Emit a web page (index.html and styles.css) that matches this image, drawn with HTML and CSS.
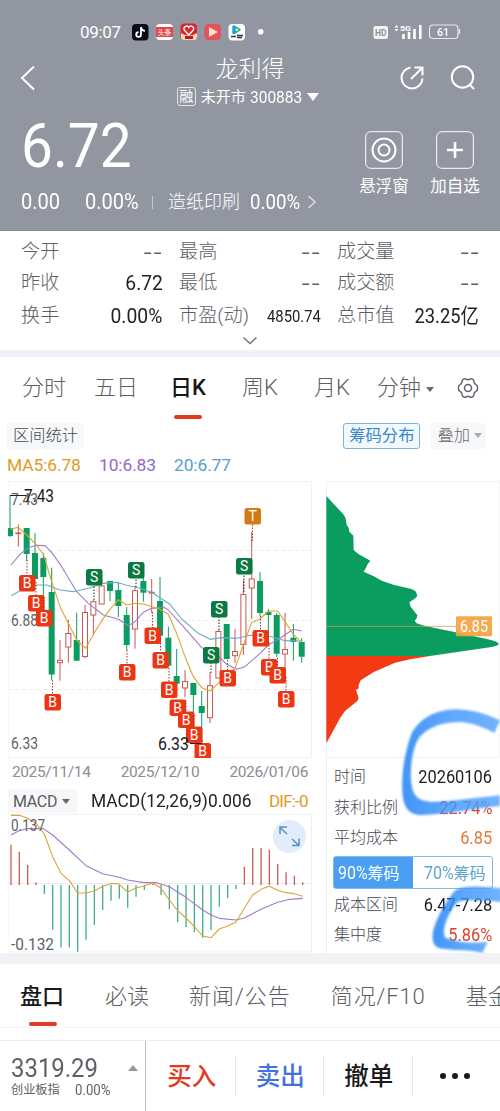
FILE: index.html
```html
<!DOCTYPE html>
<html lang="zh-CN">
<head>
<meta charset="utf-8">
<title>龙利得 300883</title>
<link rel="stylesheet" href="styles.css">
</head>
<body>
<div class="app">
  <header class="head">
    <div class="status">
      <span class="clock">09:07</span>
      <svg class="apps" width="190" height="18" viewBox="130 23 190 18">
        <rect x="132" y="24" width="16.500" height="16.500" rx="4" fill="#090b18"/>
        <path d="M141 27v7.500a2.400 2.400 0 1 1-2.400-2.400M141 27.500c.5 2 2 3.300 4 3.400" fill="none" stroke="#fff" stroke-width="1.800"/>
        <rect x="156" y="24" width="17" height="16" rx="4" fill="#fff"/>
        <rect x="156" y="27" width="17" height="10" fill="#e84549"/>
        <text x="157.500" y="35" font-size="7" fill="#fff" textLength="14">头条</text>
        <rect x="180.500" y="23.500" width="16.500" height="16.500" rx="4" fill="#d8242c"/>
        <path d="M181 33q8 5 16 0v4q0 3-3 3h-10q-3 0-3-3z" fill="#f7d8b8"/>
        <path d="M188.800 35l-4.500-5a2.300 2.300 0 0 1 4.500-2.500a2.300 2.300 0 0 1 4.500 2.500z" fill="#d8242c" stroke="#fff" stroke-width="1.400"/>
        <path d="M185 36h8v3h-8z" fill="#b51d24"/>
        <rect x="204.500" y="24" width="16.500" height="16" rx="4" fill="#e2535c"/>
        <path d="M209 27l9 5-9 5z" fill="#fde3c8"/>
        <rect x="228.500" y="24" width="16.500" height="16.500" rx="4" fill="#fff"/>
        <path d="M232.500 27q0-2 2-1.300l5 2.500q2.500 1.300 0 2.800l-5 3q-2 .6-2-1.500z" fill="#28b768"/><path d="M232.500 27q0-2 2-1.300l2 1-1 3.500 1.500 2.500-2.500 1.300q-2 .6-2-1.500z" fill="#1e9bea"/><path d="M235.800 28.200l2.800 1.500-2.800 1.500z" fill="#fff"/>
        <path d="M231 36.500h5m1-1h6m-6 2h5" stroke="#333" stroke-width="1.300"/>
        <circle cx="260.700" cy="31.700" r="2.800" fill="#fff"/>
      </svg>
      <svg class="signal" width="90" height="18" viewBox="372 23 90 18">
        <rect x="373.500" y="26" width="14.500" height="13" rx="2" fill="#f3f4f6"/>
        <text x="375" y="36" font-size="9.500" font-weight="700" fill="#8d9199" textLength="11.500" lengthAdjust="spacingAndGlyphs">HD</text>
        <path d="M394.500 27.500l2-2.500 2 2.500zM394.500 29l2 2.500 2-2.500z" fill="#fff"/>
        <text x="400" y="31" font-size="8" font-weight="700" fill="#fff" textLength="11" lengthAdjust="spacingAndGlyphs">5G</text>
        <path d="M403.500 34v5M409 32v7M414.500 29v10M420.300 25v14" stroke="#fff" stroke-width="2.600"/>
        <rect x="429.500" y="25" width="28.500" height="13.500" rx="3.500" fill="none" stroke="#e9eaed" stroke-width="1.200"/>
        <path d="M459.500 29v5" stroke="#e9eaed" stroke-width="1.300"/>
        <text x="437" y="35.800" font-size="10.500" font-weight="500" fill="#fff" textLength="12" lengthAdjust="spacingAndGlyphs">61</text>
      </svg>
    </div>

    <div class="nav">
      <svg class="back" width="18" height="28" viewBox="0 0 18 28"><path d="M15 2.500L3 14l12 11.500" fill="none" stroke="#fff" stroke-width="2"/></svg>
      <div class="title">
        <h1>龙利得</h1>
        <div class="sub"><span class="tag">融</span><span>未开市</span><span class="num code">300883</span><i class="down"></i></div>
      </div>
      <div class="nav-icons">
        <svg width="26" height="26" viewBox="0 0 26 26" fill="none" stroke="#fff" stroke-width="2"><path d="M11.500 2.500A10.500 10.500 0 1 0 23.500 13.500"/><path d="M12 14L23 3M15.500 2.500H23.500V10.500"/></svg>
        <svg width="26" height="26" viewBox="0 0 26 26" fill="none" stroke="#fff" stroke-width="2"><circle cx="12.500" cy="12" r="10.700"/><path d="M19.500 19.500L24 24"/></svg>
      </div>
    </div>

    <div class="quote">
      <div class="price"><span class="num">6.72</span></div>
      <div class="actions">
        <div class="action">
          <svg width="38" height="38" viewBox="0 0 38 38" fill="none" stroke="#fff"><rect x=".7" y=".7" width="36.600" height="36.600" rx="5" stroke-width="1"/><circle cx="19" cy="19" r="11.500" stroke-width="2"/><circle cx="19" cy="19" r="5.500" stroke-width="2"/></svg>
          <span>悬浮窗</span>
        </div>
        <div class="action">
          <svg width="38" height="38" viewBox="0 0 38 38" fill="none" stroke="#fff"><rect x=".7" y=".7" width="36.600" height="36.600" rx="5" stroke-width="1"/><path d="M19 11v16M11 19h16" stroke-width="2.600"/></svg>
          <span>加自选</span>
        </div>
      </div>
    </div>
    <div class="change">
      <span class="num c1">0.00</span><span class="num c2">0.00%</span><i class="bar"></i>
      <span class="sector">造纸印刷</span><span class="num c3">0.00%</span>
      <svg width="10" height="16" viewBox="0 0 10 16"><path d="M1.500 2L8 8l-6.500 6" fill="none" stroke="#d9dbdf" stroke-width="1.600"/></svg>
    </div>
  </header>

  <section class="stats">
    <div class="stat"><span>今开</span><b class="dash">--</b></div>
    <div class="stat"><span>最高</span><b class="dash">--</b></div>
    <div class="stat"><span>成交量</span><b class="dash">--</b></div>
    <div class="stat"><span>昨收</span><b class="num">6.72</b></div>
    <div class="stat"><span>最低</span><b class="dash">--</b></div>
    <div class="stat"><span>成交额</span><b class="dash">--</b></div>
    <div class="stat"><span>换手</span><b class="num">0.00%</b></div>
    <div class="stat"><span>市盈(动)</span><b class="num small">4850.74</b></div>
    <div class="stat"><span>总市值</span><b class="num cap">23.25亿</b></div>
    <svg class="more" width="16" height="9" viewBox="0 0 16 9"><path d="M1.500 1.500L8 7.500l6.500-6" fill="none" stroke="#777" stroke-width="1.500"/></svg>
  </section>

  <nav class="periods">
    <span>分时</span><span>五日</span><span class="on">日K</span><span>周K</span><span>月K</span>
    <span class="minute">分钟<i class="caret"></i></span>
    <svg class="gear" width="22" height="22" viewBox="0 0 22 22" fill="none" stroke="#5f636b" stroke-width="1.500" stroke-linejoin="round"><path d="M6.500 2.200Q8 1.200 9.200 2.200Q11 3.400 12.800 2.200Q14 1.200 15.500 2.200Q17 3 17 4.800Q17.200 6.800 19 7.600Q20.600 8.300 20.600 11T19 14.400Q17.200 15.200 17 17.200Q17 19 15.500 19.800Q14 20.800 12.800 19.800Q11 18.600 9.200 19.800Q8 20.800 6.500 19.800Q5 19 5 17.200Q4.800 15.200 3 14.400Q1.400 13.700 1.400 11T3 7.600Q4.800 6.800 5 4.800Q5 3 6.500 2.200Z"/><circle cx="11" cy="11" r="3.500"/></svg>
  </nav>

  <div class="tools">
    <span class="chip">区间统计</span>
    <span class="chip active">筹码分布</span>
    <span class="chip overlay">叠加<i class="caret light"></i></span>
  </div>

  <div class="ma">
    <span class="m5">MA5:6.78</span><span class="m10">10:6.83</span><span class="m20">20:6.77</span>
  </div>

  <main class="board">
    <div class="left">
      <svg class="kline" width="304" height="277" viewBox="8 481 304 277">
        <rect x="8" y="481.500" width="303.500" height="276" fill="none" stroke="#f1f1f3"/>
        <path d="M8 550.500h303M8 620.500h303M8 689.500h303" stroke="#ececee" stroke-dasharray="4 3"/>
        <g class="axis">
          <text x="11" y="505" textLength="27" lengthAdjust="spacingAndGlyphs">7.43</text>
          <text x="11" y="626" textLength="27" lengthAdjust="spacingAndGlyphs">6.88</text>
          <text x="11" y="749" textLength="27" lengthAdjust="spacingAndGlyphs">6.33</text>
        </g>
        <g id="candles"></g>
        <g fill="none" stroke-width="3.300" stroke-linejoin="round" transform="translate(0 475) scale(.33333)">
          <path stroke="#6caccb" d="M33 362L70 342 105 330 140 330 180 345 220 350 265 340 310 325 350 322 380 331 420 340 455 352 480 368 510 388 545 432 595 475 630 493 665 488 710 490 745 482 780 478 815 485 855 497 905 498"/>
          <path stroke="#a07ccb" d="M33 270L60 238 85 218 110 211 135 212 155 232 185 275 230 350 265 385 310 420 355 433 385 452 405 440 430 412 455 400 490 396 505 405 555 460 605 518 630 527 655 543 680 568 710 583 735 575 780 535 805 510 835 493 880 463 905 468"/>
          <path stroke="#dba43a" d="M30 163L55 157 80 180 105 205 130 237 155 320 180 395 205 445 230 495 257 520 282 475 305 437 330 403 355 374 380 390 405 385 430 387 455 395 480 403 505 418 530 475 555 545 580 605 605 638 630 648 655 625 680 600 705 580 730 510 755 443 780 432 805 408 833 408 855 440 880 478 905 502"/>
        </g>
        <g id="badges"></g>
        <path d="M10 495.500h16M190 743.500h12" stroke="#222"/>
        <g class="extreme">
          <text x="24" y="502" textLength="30" lengthAdjust="spacingAndGlyphs">7.43</text>
          <text x="158" y="750" textLength="31" lengthAdjust="spacingAndGlyphs">6.33</text>
        </g>
      </svg>
      <div class="dates"><span>2025/11/14</span><span>2025/12/10</span><span>2026/01/06</span></div>
      <div class="macd-head">
        <span class="select">MACD<i class="caret"></i></span>
        <span class="formula"><em>MACD(12,26,9)0.006</em></span>
        <span class="dif">DIF:-0</span>
      </div>
      <svg class="macd" width="304" height="139" viewBox="8 814 304 139">
        <rect x="8" y="814.500" width="303.500" height="137.500" fill="none" stroke="#f1f1f3"/>
        <path d="M8 883.500h303" stroke="#ececee"/>
        <g id="bars"></g>
        <g fill="none" stroke-width="3.300" stroke-linejoin="round" transform="translate(0 760) scale(.33333)">
          <path stroke="#a07ccb" d="M33 225L60 211 83 206 130 206 158 225 208 270 258 317 308 341 358 352 383 360 433 368 470 368 508 380 558 412 608 450 633 465 658 475 708 480 733 474 783 448 833 427 870 418 908 415"/>
          <path stroke="#dba43a" d="M33 166L58 166 83 175 108 190 133 222 158 290 183 340 208 362 233 399 258 399 283 393 308 379 333 371 355 371 383 396 408 384 433 378 458 369 483 385 508 420 533 452 558 474 583 500 608 528 633 533 658 507 683 498 708 486 733 445 758 405 783 388 808 379 833 391 858 398 883 401 908 409"/>
        </g>
        <g class="axis">
          <text x="11" y="830.500" textLength="34" lengthAdjust="spacingAndGlyphs">0.137</text>
          <text x="11" y="950" textLength="43" lengthAdjust="spacingAndGlyphs">-0.132</text>
        </g>
        <circle cx="289.500" cy="836.500" r="16.500" fill="#e1edfb"/>
        <path d="M287 834l-7-6.500M280 834v-7h7M292 839l7 6.500M299 838.500v7h-7" fill="none" stroke="#5f8db8" stroke-width="1.500"/>
      </svg>
    </div>

    <div class="right">
      <svg class="dist" width="174" height="277" viewBox="326 481 174 277">
        <path d="M326.500 481.500h172.500v276h-172.500z" fill="none" stroke="#f1f1f3"/>
        <g transform="translate(320 475) scale(.33333)">
          <path fill="#0b9c60" d="M19 63L70 118 77 130 80 150 86 158 88 170 100 182 101 225 115 237 151 257 143 267 138 278 131 290 160 303 185 317 220 329 265 340Q285 345 288 351L292 362 286 370 268 382 272 395 292 421 290 430 284 437 290 445 315 453 400 470 500 492Q536 500 536 506T515 516L330 543H19Z"/>
          <path fill="#f33a13" d="M19 543H330L270 553 225 563 160 592 122 616 116 630 116 640 108 645 116 670 112 678 75 708 60 730 19 805Z"/>
          <path stroke="#d69a55" stroke-width="3" opacity=".75" d="M19 454H410"/>
          <rect x="408" y="424" width="108" height="60" rx="4" fill="#f4a340" opacity=".92"/>
        </g>
        <text x="460" y="632" font-size="16" fill="#fff" textLength="28" lengthAdjust="spacingAndGlyphs">6.85</text>
      </svg>
      <div class="info">
        <div class="row"><span>时间</span><b>20260106</b></div>
        <div class="row"><span>获利比例</span><b class="red">22.74%</b></div>
        <div class="row"><span>平均成本</span><b class="orange">6.85</b></div>
        <div class="seg"><span class="sel"><em>90%</em>筹码</span><span><em>70%</em>筹码</span></div>
        <div class="row"><span>成本区间</span><b>6.47-7.28</b></div>
        <div class="row"><span>集中度</span><b class="red">5.86%</b></div>
      </div>
      <svg class="ink" width="102" height="250" viewBox="398 705 102 250">
        <defs>
          <linearGradient id="ink" x1="0" x2="1"><stop offset="0" stop-color="#1d80f5"/><stop offset=".45" stop-color="#3f97fc"/><stop offset="1" stop-color="#55a5ff"/></linearGradient>
          <filter id="edge" x="-5%" y="-5%" width="110%" height="110%"><feGaussianBlur stdDeviation="3"/></filter>
        </defs>
        <g transform="translate(320 700) scale(.33333)" fill="url(#ink)" opacity=".84" filter="url(#edge)">
          <path d="M540 61Q470 27 405 28C345 29 295 58 273 105C252 165 245 220 247 270C248 315 262 345 305 345C385 343 470 324 540 318V286C460 293 390 306 335 305C285 303 277 280 273 240C270 190 280 140 297 113C330 73 385 65 425 66Q470 70 523 99Z"/>
          <path d="M545 565Q430 552 405 572C375 605 350 655 340 690C334 720 340 740 360 745C400 753 450 748 487 759L503 725C450 732 400 725 375 712C365 690 380 645 412 607Q430 595 545 606Z"/>
        </g>
      </svg>
    </div>
  </main>

  <nav class="sections">
    <span class="on">盘口</span><span>必读</span><span class="wide">新闻/公告</span><span class="wide f10">简况/F10</span><span>基金</span>
  </nav>

  <footer class="trade">
    <div class="index">
      <div class="index-top"><span class="num idx">3319.29</span><i class="up"></i></div>
      <div class="index-sub"><span>创业板指</span><span class="num pct">0.00%</span></div>
    </div>
    <div class="btn buy">买入</div>
    <div class="btn sell">卖出</div>
    <div class="btn">撤单</div>
    <div class="btn dots"><i></i><i></i><i></i></div>
  </footer>
</div>
<script src="chart.js"></script>
</body>
</html>
```
FILE: styles.css
```css
* { box-sizing: border-box; }
body {
  margin: 0;
  width: 500px;
  background: #fff;
  color: #222;
  font-family: Roboto, "Noto Sans CJK SC", sans-serif;
  line-height: 1;
  overflow: hidden;
}
b, em, i, h1 { font-weight: 400; font-style: normal; margin: 0; }
svg { display: block; flex: none; }
.app { width: 500px; height: 1111px; overflow: hidden; display: flex; flex-direction: column; }
.app > * { flex: none; }
.num { display: inline-block; transform: scaleX(.87); transform-origin: left center; }

/* header */
.head { height: 231px; background: #9296a0; color: #fff; border-bottom: 1px solid #858995; }
.status { height: 46px; padding: 18px 0 0 80px; display: flex; align-items: center; }
.clock { font-size: 17px; width: 50px; letter-spacing: -.3px; white-space: nowrap; }
.signal { margin-left: 52px; }
.nav { height: 64px; padding: 0 24px 0 19px; display: grid; grid-template-columns: 100px 1fr 100px; align-items: center; }
.title { display: flex; flex-direction: column; align-items: center; gap: 4px; padding: 1px 0 0 1px; }
.title h1 { font-size: 23px; font-weight: 300; line-height: 26px; margin: 6px 0 0 4px; }
.sub { display: flex; align-items: center; font-size: 15px; line-height: 20px; white-space: nowrap; }
.tag { width: 19px; height: 19px; border: 1px solid #e3e4e8; border-radius: 3px; font-size: 14px; line-height: 16px; text-align: center; margin-right: 5px; }
.code { font-size: 17px; margin: 0 0 0 4px; transform: scaleX(.91); }
.down { border: 6.500px solid transparent; border-top: 8px solid #fff; border-bottom: 0; }
.nav-icons { display: flex; gap: 25px; justify-content: flex-end; }
.quote { height: 88px; padding: 0 20px 0 21px; display: flex; justify-content: space-between; }
.price { font-size: 62px; line-height: 72px; }
.price .num { transform: scaleX(.915); }
.actions { display: flex; gap: 21px; padding-top: 21px; }
.action { width: 50px; display: flex; flex-direction: column; align-items: center; gap: 8px; font-size: 16.500px; line-height: 20px; white-space: nowrap; }
.change { height: 22px; margin-top: -7px; padding-left: 21px; display: flex; align-items: center; font-size: 22px; }
.c1 { width: 64px; transform: scaleX(.91); }
.c2 { width: 67px; transform: scaleX(.91); }
.bar { width: 1px; height: 13px; background: #c4c7cd; }
.sector { font-size: 18px; font-weight: 300; margin-left: 15px; }
.c3 { font-size: 21px; margin-left: 10px; width: 57px; transform: scaleX(.89); }

/* day statistics */
.stats {
  height: 119px; padding: 6px 21px 0; position: relative;
  display: grid; grid-template-columns: 141.500px 141.500px 142px; column-gap: 16.500px;
  grid-template-rows: 30px 32px 34px 14px;
}
.stat { display: flex; align-items: center; justify-content: space-between; font-size: 19.200px; font-weight: 300; color: #5c5e63; white-space: nowrap; }
.stat .num { font-size: 21px; color: #222; transform: scaleX(.92); transform-origin: right center; margin-left: -20px; }
.stat .small { font-size: 17px; transform: scaleX(.87); }
.stat .cap { transform: scaleX(.87); }
.dash { font-size: 21px; letter-spacing: 1.500px; margin-right: -1.500px; transform: scaleX(1.36); transform-origin: right; }
.more { grid-column: 1 / -1; justify-self: center; align-self: center; }

/* period tabs */
.periods { height: 72px; border-top: 7px solid #f1f2f9; padding-left: 8px; display: flex; font-size: 22px; font-weight: 300; line-height: 62px; color: #5c5e63; }
.periods span { width: 72px; text-align: center; position: relative; }
.periods .on { color: #16181c; font-weight: 500; }
.periods .on::after { content: ""; position: absolute; left: 22px; bottom: 3px; width: 28px; height: 4px; border-radius: 2px; background: #e03a22; }
.periods .minute { width: 78px; padding-right: 3px; }
.caret { display: inline-block; border: 4px solid transparent; border-top: 5px solid #66686d; border-bottom: 0; margin-left: 5px; vertical-align: 3px; }
.gear { margin: 20px 0 0 11px; }

/* chart tools */
.tools { height: 28px; padding: 1px 14px 0 7px; display: flex; gap: 11px; }
.chip { height: 26px; line-height: 26px; font-size: 16.300px; font-weight: 300; color: #45484e; background: #f7f8fa; border-radius: 3px; padding: 0 6px; white-space: nowrap; }
.chip.active { margin-left: auto; font-weight: 400; line-height: 24px; border: 1px solid #7fb2d6; color: #3d86c4; background: #f1f8fe; padding: 0 5px; }
.chip.overlay { color: #66686d; padding: 0 4px 0 6px; }
.caret.light { border-top-color: #aaa; margin-left: 4px; }
.ma { height: 31px; padding-left: 7px; display: flex; align-items: center; font-size: 17.400px; letter-spacing: -.1px; }
.ma span { white-space: nowrap; }
.m5 { width: 92px; color: #dd9b25; }
.m10 { width: 75px; color: #9168cb; }
.m20 { color: #56a0c9; }

/* charts */
.board { height: 472px; padding-left: 8px; display: flex; gap: 14px; }
.left { width: 304px; }
.axis { font-size: 17px; fill: #5f6166; }
.extreme { font-size: 18px; fill: #1c1c1e; }
.badge { font-size: 14px; fill: #fff; text-anchor: middle; }
.dates { height: 30px; padding: 0 4px 0 4px; display: flex; justify-content: space-between; align-items: center; font-size: 15.500px; letter-spacing: -.4px; color: #8b8d92; }
.macd-head { height: 26px; display: flex; align-items: center; white-space: nowrap; width: 304px; }
.select { width: 69px; height: 24px; line-height: 25px; padding-left: 5px; background: #f6f7f9; font-size: 16px; letter-spacing: -.3px; color: #5a5c61; }
.formula { width: 178px; padding-left: 14px; font-size: 18px; }
.formula em { display: inline-block; transform: scaleX(.965); transform-origin: left; }
.dif { width: 55px; padding-left: 14px; font-size: 17px; line-height: 24px; letter-spacing: -.8px; color: #dd9b25; }

/* cost distribution */
.right { width: 174px; position: relative; }
.info { padding: 4px 8px 0 7px; border-left: 1px solid #eeeef0; height: 195px; }
.row { height: 30.500px; display: flex; justify-content: space-between; align-items: center; font-size: 16px; font-weight: 300; color: #45484e; white-space: nowrap; }
.row b { font-size: 18px; color: #1d1d20; transform: scaleX(.91); transform-origin: right; }
.row .red { color: #d8432e; }
.row .orange { color: #df7d36; }
.seg { height: 33px; margin: 2px 0 1px -1px; width: 160px; display: flex; border: 1px solid #7fbce2; border-radius: 3px; font-size: 16px; line-height: 32px; color: #5aa6d0; white-space: nowrap; }
.seg span { width: 79px; flex: none; padding-left: 11px; }
.seg em { display: inline-block; font-size: 18px; transform: scaleX(.89); transform-origin: left; margin-right: -4px; }
.seg .sel { background: #4a9ff3; color: #fff; padding-left: 4px; }
.ink { position: absolute; right: 0; top: 224px; }

/* section tabs */
.sections { height: 88px; border-top: 11px solid #f1f2f6; border-bottom: 1px solid #eeeef0; display: flex; font-size: 22px; font-weight: 300; line-height: 66px; color: #5c5e63; white-space: nowrap; padding-left: 20px; position: relative; }
.sections span { margin-right: 40px; position: relative; }
.sections .on { color: #17191d; font-weight: 500; margin-right: 41px; }
.sections .wide { letter-spacing: 1px; }
.sections .f10 { letter-spacing: .9px; }
.sections .on::after { content: ""; position: absolute; left: 9px; top: 58px; width: 28px; height: 4px; border-radius: 2px; background: #e03a22; }
.sections::after { content: ""; position: absolute; left: 0; right: 0; top: 63px; height: 1px; background: #f4f4f6; }

/* trade bar */
.trade { height: 70px; display: flex; }
.index { width: 146px; border-right: 1px solid #bdbfc4; padding: 14px 7px 0 11px; color: #5f6166; }
.index-top { display: flex; justify-content: space-between; height: 26px; }
.idx { font-size: 26px; line-height: 26px; transform: scaleX(.92); }
.up { border: 5px solid transparent; border-bottom: 6px solid #9298a0; border-top: 0; align-self: center; }
.index-sub { display: flex; gap: 15px; font-size: 12.200px; line-height: 18px; }
.pct { font-size: 15px; transform: scaleX(.88); }
.btn { width: 88.500px; padding-left: 3px; font-size: 24.500px; line-height: 71px; text-align: center; position: relative; color: #1a1a1c; font-weight: 500; }
.btn + .btn::before { content: ""; position: absolute; left: 0; top: 15px; height: 40px; width: 1px; background: #e5e5e7; }
.buy { color: #e23a1e; }
.sell { color: #4371df; }
.dots { display: flex; gap: 6px; justify-content: center; align-items: center; padding: 0 2px 0 0; }
.dots i { width: 6px; height: 6px; border-radius: 50%; background: #1a1a1c; }
```
FILE: chart.js
```js
// kind, high, body top, body bottom, low
const candles = [
  ["g",495,528,536,537],["r",524.6,533,533.6,546.7],["g",528,528,554,561],["g",533,553,579,579],
  ["g",553,558,577,597],["g",567.7,592,674.5,680],["r",640,660.3,662.7,680.7],["r",620,633.5,647,662.7],
  ["g",612.7,640,660.7,661],["r",605,612.5,656.5,658.5],["r",600,601.7,615,635],["r",576.7,586,604,604],
  ["g",581,581,591,601],["g",582,590,606,617],["g",607,615,645,650],["r",586,590.7,629,648.7],
  ["g",578,581,592.7,601.7],["r",579,592.3,593,613],["g",577,601,635.7,641],["g",626.7,637.7,665.7,666],
  ["g",649,676,683.7,684],["r",670,681.5,688,697],["g",683,683,695,715],["g",691,706,713,741],
  ["r",672,685.7,717.7,723],["r",630,631.5,678,678],["g",624,624,659,659],["r",629,651.5,655.7,663],
  ["r",580,594.5,644.5,655],["r",532,579,588,619],["g",572,581,613,616],["g",609,612,615,640],
  ["g",613,615,653.7,657],["r",613,649.5,654,676],["g",624,637.7,642,660.7],["g",638,642,656.7,662.7]
];
const step = 8.335, red = "#c8564e", green = "#0b9c60";
document.getElementById("candles").innerHTML = candles.map(([k, h, t, b, l], i) => {
  const x = 10 + i * step;
  if (k === "g") {
    return `<path d="M${x} ${h}V${l}" stroke="${green}"/><rect x="${x - 3}" y="${t}" width="6" height="${b - t}" fill="${green}"/>`;
  }
  return `<path d="M${x} ${h}V${t}M${x} ${b}V${l}" stroke="${red}"/><rect x="${x - 2.5}" y="${t}" width="5" height="${b - t}" fill="#fff" stroke="${red}"/>`;
}).join("");

// letter, x, y, y of the candle end the dotted leader starts from
const badges = [
  ["B",27,583,560],["B",36,603,582],["B",44,618,597],["B",52.5,702,680],["S",94,577,600],["B",127,672,650],
  ["S",136,570,587],["B",152.5,635.5,612],["B",160.5,660,640],["B",169,689.5,668],["B",177.5,707.5,700],
  ["B",186,719.5,700],["B",194,734.5,715],["B",202.5,751,741],["S",211,655,673],["S",219,609,630],
  ["B",227.5,678,660],["S",244,566,592],["T",252.5,516,541],["B",260.5,638,616],["B",269,667,642],
  ["B",277.5,675,658],["B",286,699,677]
];
const fills = { B: "#ec3513", S: "#0b7a42", T: "#d57a10" };
document.getElementById("badges").innerHTML = badges.map(([c, x, y, from]) =>
  `<path d="M${x} ${from}V${y}" stroke="${c === "S" ? "#222" : "#8e3a28"}" stroke-dasharray="1.5 1.5"/>` +
  `<rect x="${x - 8}" y="${y - 8}" width="16.5" height="16.5" rx="2.5" fill="${fills[c]}"/>` +
  `<text class="badge" x="${x + .2}" y="${y + 5}">${c}</text>`).join("");

// histogram ends; values above the zero line at 885 are positive
const bars = [844.7,851.7,865,882.3,893.7,929.7,947.3,947.3,951.7,939.7,925,910,900.7,898.7,907.7,896.7,890,884,
  895,909.3,922.3,927.3,932,937.7,930,906.7,898.3,889,866.7,848,848,849.7,864,872.3,875.7,882.3];
document.getElementById("bars").innerHTML = bars.map((y, i) =>
  `<path d="M${11 + i * 8.335} 885V${y}" stroke="${y < 885 ? "#c65c53" : "#3fae8a"}" stroke-width="1.3"/>`).join("");
```
